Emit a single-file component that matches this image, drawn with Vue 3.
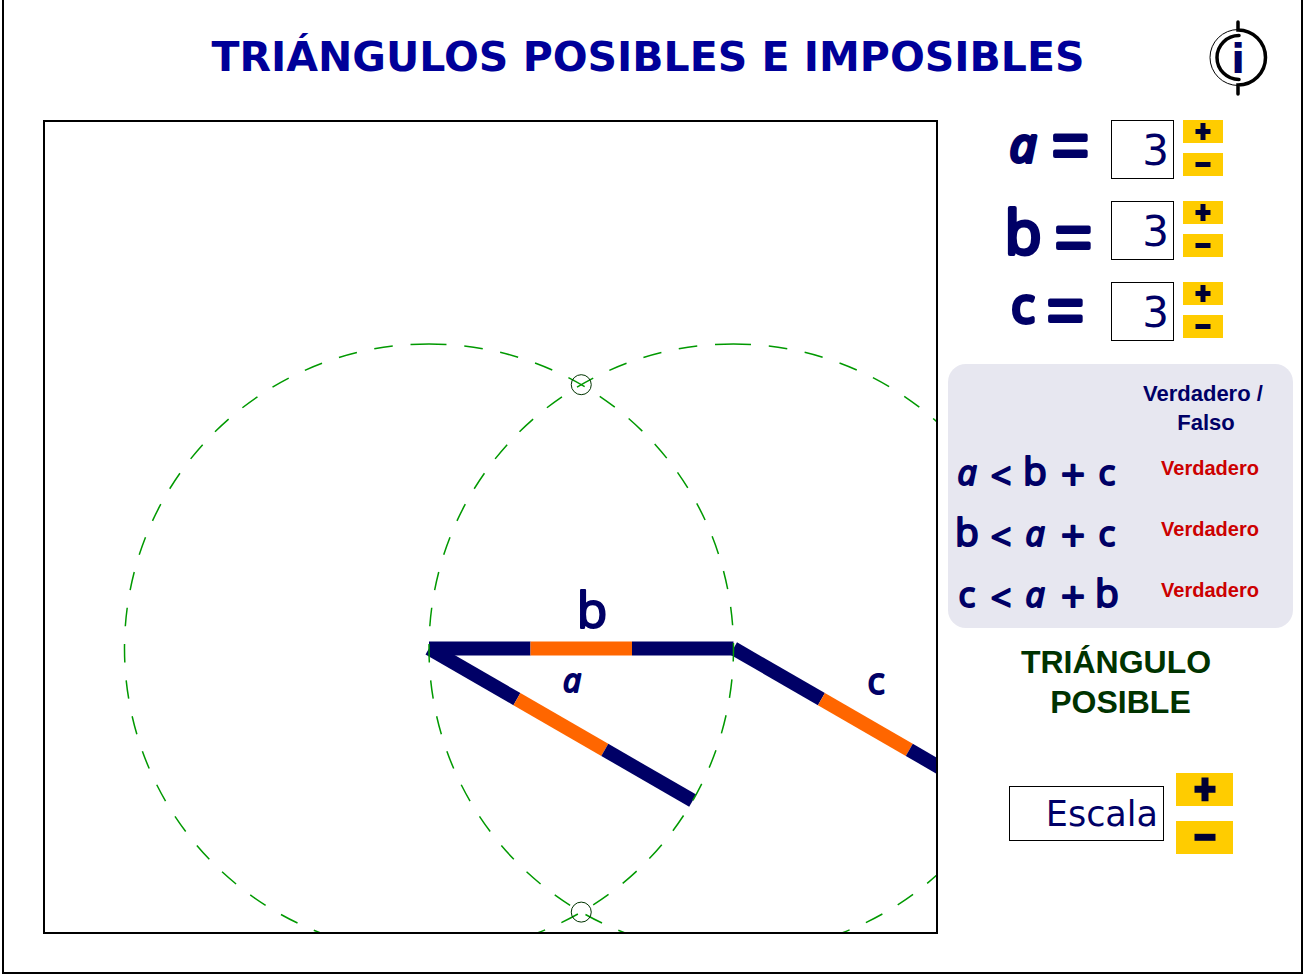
<script setup>
import { computed, reactive, ref } from 'vue'

const lengths = reactive({ a: 3, b: 3, c: 3 })
const unit = ref(101.5)

const rows = [
  { id: 'a', size: 47, baseline: 42, eqX: 44, eqY: 47 },
  { id: 'b', size: 60, baseline: 53, eqX: 47, eqY: 58 },
  { id: 'c', size: 49, baseline: 41, eqX: 39, eqY: 50 },
]

const checks = computed(() => [
  { terms: ['a', '<', 'b', '+', 'c'], ok: lengths.a < lengths.b + lengths.c },
  { terms: ['b', '<', 'a', '+', 'c'], ok: lengths.b < lengths.a + lengths.c },
  { terms: ['c', '<', 'a', '+', 'b'], ok: lengths.c < lengths.a + lengths.b },
])
const possible = computed(() => checks.value.every((c) => c.ok))
const termX = [19, 53, 87, 125, 159]
const termStyle = {
  a: { size: 34, y: 47 },
  b: { size: 39, y: 47 },
  c: { size: 35, y: 47 },
  '<': { size: 36, y: 51 },
  '+': { size: 42, y: 52 },
}

const origin = { x: 384, y: 526.4 }
const cos30 = Math.cos(Math.PI / 6)
const second = computed(() => ({ x: origin.x + lengths.b * unit.value, y: origin.y }))

function thirds(from, length, dx, dy) {
  const step = (length * unit.value) / 3
  return [0, 1, 2].map((i) => ({
    x1: from.x + dx * step * i,
    y1: from.y + dy * step * i,
    x2: from.x + dx * step * (i + 1),
    y2: from.y + dy * step * (i + 1),
    mid: i === 1,
  }))
}
const bars = computed(() => [
  ...thirds(origin, lengths.a, cos30, 0.5),
  ...thirds(second.value, lengths.c, cos30, 0.5),
  ...thirds(origin, lengths.b, 1, 0),
])

function circlePath(center, r) {
  return `M${center.x} ${center.y - r}a${r} ${r} 0 0 1 0 ${2 * r}a${r} ${r} 0 0 1 0 ${-2 * r}`
}
const circles = computed(() => [
  circlePath(origin, lengths.a * unit.value),
  circlePath(second.value, lengths.c * unit.value),
])
const crossings = computed(() => {
  if (!possible.value) return []
  const { a, b, c } = lengths
  const x = (a * a - c * c + b * b) / (2 * b)
  const h = Math.sqrt(Math.max(0, a * a - x * x))
  return [-h, h].map((y) => ({ x: origin.x + x * unit.value, y: origin.y + y * unit.value }))
})

function change(id, by) {
  lengths[id] = Math.max(1, Number(lengths[id]) + by)
}
function zoom(by) {
  unit.value = Math.max(10, unit.value + by)
}
</script>

<template>
  <div class="page">
    <header class="header">
      <h1>TRIÁNGULOS POSIBLES E IMPOSIBLES</h1>
      <button class="info" type="button" aria-label="Información">
        <svg viewBox="0 0 60 80" width="60" height="80" aria-hidden="true">
          <g fill="none" stroke="#000" stroke-linecap="round">
            <path d="M30 5V13A27.500 27.500 0 0 1 30 68V77" stroke-width="3.500" />
            <path d="M30 12.500A28 28 0 0 0 30 68.500" stroke-width="1" />
            <path d="M31 18.500A22 22 0 0 0 31 62.500" stroke-width="3.500" />
          </g>
          <text class="info-letter" x="30" y="56" text-anchor="middle">i</text>
        </svg>
      </button>
    </header>

    <main class="main">
      <section class="board" aria-label="Construcción">
        <svg viewBox="0 0 891 810" role="img" aria-label="Segmentos a, b y c">
          <line
            v-for="(s, i) in bars" :key="i"
            :x1="s.x1" :y1="s.y1" :x2="s.x2" :y2="s.y2"
            :class="['bar', { mid: s.mid }]"
          />
          <path v-for="(d, i) in circles" :key="'c' + i" :d="d" class="arc" />
          <circle v-for="(p, i) in crossings" :key="'p' + i" :cx="p.x" :cy="p.y" r="10" class="crossing" />
          <text class="hand" x="547" y="506" font-size="50" text-anchor="middle">b</text>
          <text class="hand slant" x="527" y="570" font-size="32" text-anchor="middle">a</text>
          <text class="hand" x="831" y="572" font-size="36" text-anchor="middle">c</text>
        </svg>
      </section>

      <aside class="side">
        <div class="controls">
          <div v-for="row in rows" :key="row.id" class="control">
            <label :for="'len-' + row.id">
              <svg viewBox="0 0 100 59" width="100" height="59">
                <text
                  :class="['hand', 'thick', { slant: row.id === 'a' }]"
                  x="15" :y="row.baseline" :font-size="row.size" text-anchor="middle"
                >{{ row.id }}</text>
                <text class="hand thick equals" :x="row.eqX" :y="row.eqY">=</text>
              </svg>
            </label>
            <input :id="'len-' + row.id" v-model.number="lengths[row.id]" class="value" type="text" />
            <div class="steps">
              <button type="button" :aria-label="'Aumentar ' + row.id" @click="change(row.id, 1)">
                <svg viewBox="0 0 20 20" width="20" height="20"><path d="M2.500 9.500h15M10 1v17" /></svg>
              </button>
              <button type="button" :aria-label="'Disminuir ' + row.id" @click="change(row.id, -1)">
                <svg viewBox="0 0 20 20" width="20" height="20"><path d="M2.500 9.500h15" /></svg>
              </button>
            </div>
          </div>
        </div>

        <table class="checks">
          <thead>
            <tr><td></td><th scope="col">Verdadero /&nbsp;<br />Falso</th></tr>
          </thead>
          <tbody>
            <tr v-for="(check, i) in checks" :key="i">
              <th scope="row">
                <svg viewBox="0 0 177 61" width="177" height="61">
                  <text class="hand" text-anchor="middle"><tspan
                    v-for="(t, k) in check.terms" :key="k" :x="termX[k]" :y="termStyle[t].y"
                    :font-size="termStyle[t].size" :class="{ slant: t === 'a' }"
                  >{{ t }}</tspan></text>
                </svg>
              </th>
              <td>{{ check.ok ? 'Verdadero' : 'Falso' }}</td>
            </tr>
          </tbody>
        </table>

        <p class="result">TRIÁNGULO&nbsp;<br />{{ possible ? 'POSIBLE' : 'IMPOSIBLE' }}</p>

        <div class="scale">
          <input type="text" value="Escala" aria-label="Escala" readonly />
          <div class="steps large">
            <button type="button" aria-label="Aumentar escala" @click="zoom(10)">
              <svg viewBox="0 0 20 20" width="28" height="28"><path d="M2.500 9.500h15M10 1v17" /></svg>
            </button>
            <button type="button" aria-label="Disminuir escala" @click="zoom(-10)">
              <svg viewBox="0 0 20 20" width="28" height="28"><path d="M2.500 9.500h15" /></svg>
            </button>
          </div>
        </div>
      </aside>
    </main>
  </div>
</template>

<style>
body {
  background: #fff;
}
</style>

<style scoped>
* {
  box-sizing: border-box;
}
.page {
  min-height: 100vh;
  margin: 0 3px 0 2px;
  border: 2px solid #000;
  border-top: 0;
  font-family: "Liberation Sans", Arial, sans-serif;
}
.header {
  display: grid;
  grid-template-columns: 60px 1fr 60px;
  align-items: start;
  height: 120px;
  padding: 0 33px 0 24px;
}
h1 {
  grid-column: 2;
  margin: 0;
  padding-top: 27px;
  color: #009;
  font: bold 41px/60px "DejaVu Sans", Verdana, sans-serif;
  text-align: center;
  white-space: nowrap;
}
button {
  display: flex;
  align-items: center;
  justify-content: center;
  padding: 0;
  border: 0;
  cursor: pointer;
}
.info {
  margin-top: 17px;
  background: none;
}
.info-letter {
  fill: #006;
  font: bold 40px "DejaVu Sans", sans-serif;
}
.main {
  display: grid;
  grid-template-columns: minmax(0, 1fr) 345px;
  gap: 10px;
  align-items: start;
  padding: 0 8px 38px 39px;
}
.board {
  border: 2px solid #000;
}
.board svg {
  display: block;
  width: 100%;
}
.bar {
  stroke: #006;
  stroke-width: 14px;
}
.mid {
  stroke: #f60;
}
.arc {
  fill: none;
  stroke: #090;
  stroke-width: 1.5px;
  stroke-dasharray: 18.6 17.84;
  stroke-dashoffset: 1;
}
.crossing {
  fill: none;
  stroke: #030;
  stroke-width: 1px;
}
.hand {
  fill: #006;
  stroke: #006;
  stroke-width: 2px;
  stroke-linejoin: round;
  font-family: "Open Sans", sans-serif;
  font-weight: 400;
}
.slant {
  font-style: italic;
}
.thick {
  stroke-width: 4px;
}
.equals {
  font-family: "Liberation Sans", Arial, sans-serif;
  font-size: 63px;
}
.controls {
  display: grid;
  gap: 22px;
  padding-left: 60px;
}
.control {
  display: flex;
  align-items: flex-start;
}
label {
  width: 103px;
}
label svg,
.checks svg {
  display: block;
  overflow: visible;
}
input {
  border: 1px solid #000;
  border-radius: 0;
  background: #fff;
  color: #006;
  font-family: "DejaVu Sans", Verdana, sans-serif;
  text-align: right;
}
.value {
  width: 63px;
  height: 59px;
  padding: 2px 4px 0;
  font-size: 42px;
}
.steps {
  display: grid;
  gap: 10px;
  margin-left: 9px;
}
.steps button {
  width: 40px;
  height: 23px;
  background: #fc0;
}
.steps path {
  fill: none;
  stroke: #003;
  stroke-width: 5px;
}
.checks {
  width: 100%;
  margin-top: 23px;
  padding: 15px 0 7px;
  border-spacing: 0;
  border-radius: 18px;
  background: #e7e7f0;
  font-weight: bold;
}
.checks th,
.checks td {
  padding: 0;
}
.checks thead th {
  padding: 0 6px 1px 0;
  color: #006;
  font-size: 22px;
  line-height: 29px;
}
.checks tbody th {
  width: 177px;
}
.checks tbody td {
  padding-left: 2px;
  color: #c00;
  font-size: 20px;
  text-align: center;
}
.result {
  margin: 14px 0 0;
  color: #030;
  font-size: 32px;
  font-weight: bold;
  line-height: 40px;
  text-align: center;
}
.scale {
  display: flex;
  align-items: center;
  margin-top: 51px;
  padding-left: 61px;
}
.scale input {
  width: 155px;
  height: 55px;
  padding: 0 5px;
  font-size: 35px;
}
.large {
  gap: 15px;
  margin-left: 12px;
}
.large button {
  width: 57px;
  height: 33px;
}
</style>
